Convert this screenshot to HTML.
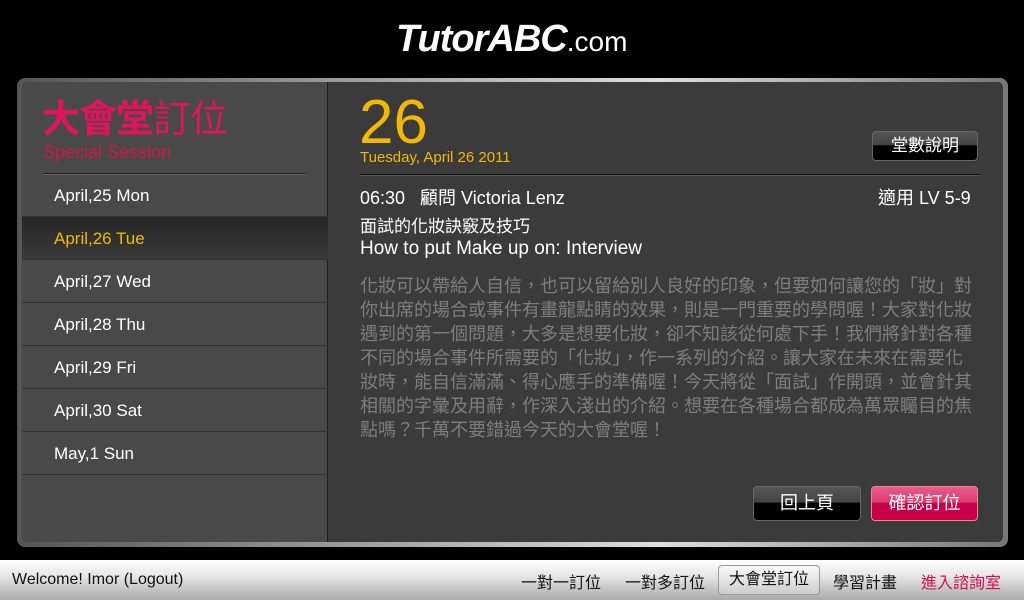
<!DOCTYPE html>
<html><head><meta charset="utf-8"><style>
*{margin:0;padding:0;box-sizing:border-box}
body{width:1024px;height:600px;background:#000;position:relative;overflow:hidden;font-family:"Liberation Sans","Noto Sans CJK TC",sans-serif;color:#fff}
.abs{position:absolute}
.logo{left:396px;top:18px;font-size:38px;font-style:italic;font-weight:bold;letter-spacing:-1px;color:#fff;white-space:nowrap}
.logo small{font-size:28px;font-style:normal;font-weight:normal;letter-spacing:0}
.panel{left:17px;top:78px;width:991px;height:469px;border-radius:8px;background:linear-gradient(90deg,#555,#aaa 40%,#ddd 65%,#777);padding:4px 5px 5px 5px}
.inner{width:100%;height:100%;border-radius:5px;background:#3b3b3b;position:relative;overflow:hidden}
.left{left:0;top:0;width:306px;height:100%;background:#494949;border-right:1px solid #1e1e1e}
.title{left:20px;top:16px;font-size:38px;color:#e0145a;line-height:44px;letter-spacing:-1px}
.sub{left:21px;top:60px;font-size:18px;color:#d2144f}
.row{left:0;width:306px;height:43px;font-size:17px;line-height:43px;padding-left:32px;border-bottom:1px solid #333}
.sel{background:linear-gradient(#262626,#3a3a3a);color:#f5b800}
.btn{border-radius:4px;font-size:18px;text-align:center;border:1px solid #666}
.blk{background:linear-gradient(#555 0,#444 45%,#000 50%,#000)}
.pink{background:linear-gradient(#e85a8c 0,#dd3c70 45%,#c8004a 50%,#c8004a);border-color:#e88}
.desc{left:338px;top:192px;width:620px;font-size:18px;line-height:24px;color:#7d7d7d}
.bar{left:0;top:560px;width:1024px;height:40px;background:linear-gradient(#fff,#e6e6e6 40%,#aaa);color:#111;font-size:16px}
</style></head><body>
<div class="abs logo">TutorABC<small>.com</small></div>
<div class="abs panel"><div class="inner">
 <div class="abs left">
  <div class="abs title"><b>大會堂</b>訂位</div>
  <div class="abs sub">Special Session</div>
  <div class="abs" style="left:21px;top:91px;width:263px;border-top:1px solid #222;border-bottom:1px solid #666"></div>
  <div class="abs row" style="top:92px">April,25 Mon</div>
  <div class="abs row sel" style="top:135px">April,26 Tue</div>
  <div class="abs row" style="top:178px">April,27 Wed</div>
  <div class="abs row" style="top:221px">April,28 Thu</div>
  <div class="abs row" style="top:264px">April,29 Fri</div>
  <div class="abs row" style="top:307px">April,30 Sat</div>
  <div class="abs row" style="top:350px">May,1 Sun</div>
 </div>
 <div class="abs" style="left:337px;top:6px;font-size:62px;color:#f5b800;line-height:70px">26</div>
 <div class="abs" style="left:338px;top:67px;font-size:15px;color:#f5b800">Tuesday, April 26 2011</div>
 <div class="abs btn blk" style="left:850px;top:49px;width:106px;height:30px;line-height:28px;font-size:17px">堂數說明</div>
 <div class="abs" style="left:338px;top:92px;width:620px;border-top:1px solid #111;border-bottom:1px solid #555"></div>
 <div class="abs" style="left:338px;top:102px;font-size:18px">06:30 &nbsp; 顧問 Victoria Lenz</div>
 <div class="abs" style="left:856px;top:102px;font-size:18px">適用 LV 5-9</div>
 <div class="abs" style="left:338px;top:134px;font-size:17px;line-height:22px">面試的化妝訣竅及技巧</div>
 <div class="abs" style="left:338px;top:156px;font-size:19px;line-height:22px">How to put Make up on: Interview</div>
 <div class="abs desc">化妝可以帶給人自信，也可以留給別人良好的印象，但要如何讓您的「妝」對你出席的場合或事件有畫龍點睛的效果，則是一門重要的學問喔！大家對化妝遇到的第一個問題，大多是想要化妝，卻不知該從何處下手！我們將針對各種不同的場合事件所需要的「化妝」，作一系列的介紹。讓大家在未來在需要化妝時，能自信滿滿、得心應手的準備喔！今天將從「面試」作開頭，並會針其相關的字彙及用辭，作深入淺出的介紹。想要在各種場合都成為萬眾矚目的焦點嗎？千萬不要錯過今天的大會堂喔！</div>
 <div class="abs btn blk" style="left:731px;top:404px;width:108px;height:35px;line-height:33px">回上頁</div>
 <div class="abs btn pink" style="left:849px;top:404px;width:107px;height:35px;line-height:33px">確認訂位</div>
</div></div>
<div class="abs bar">
 <div class="abs" style="left:12px;top:11px">Welcome! Imor (Logout)</div>
 <div class="abs" style="left:521px;top:9px">一對一訂位</div>
 <div class="abs" style="left:625px;top:9px">一對多訂位</div>
 <div class="abs" style="left:718px;top:5px;width:102px;height:30px;border:1px solid #999;border-radius:4px;background:linear-gradient(#fafafa,#ccc);text-align:center;line-height:28px">大會堂訂位</div>
 <div class="abs" style="left:833px;top:9px">學習計畫</div>
 <div class="abs" style="left:921px;top:9px;color:#d0104f">進入諮詢室</div>
</div>
</body></html>
